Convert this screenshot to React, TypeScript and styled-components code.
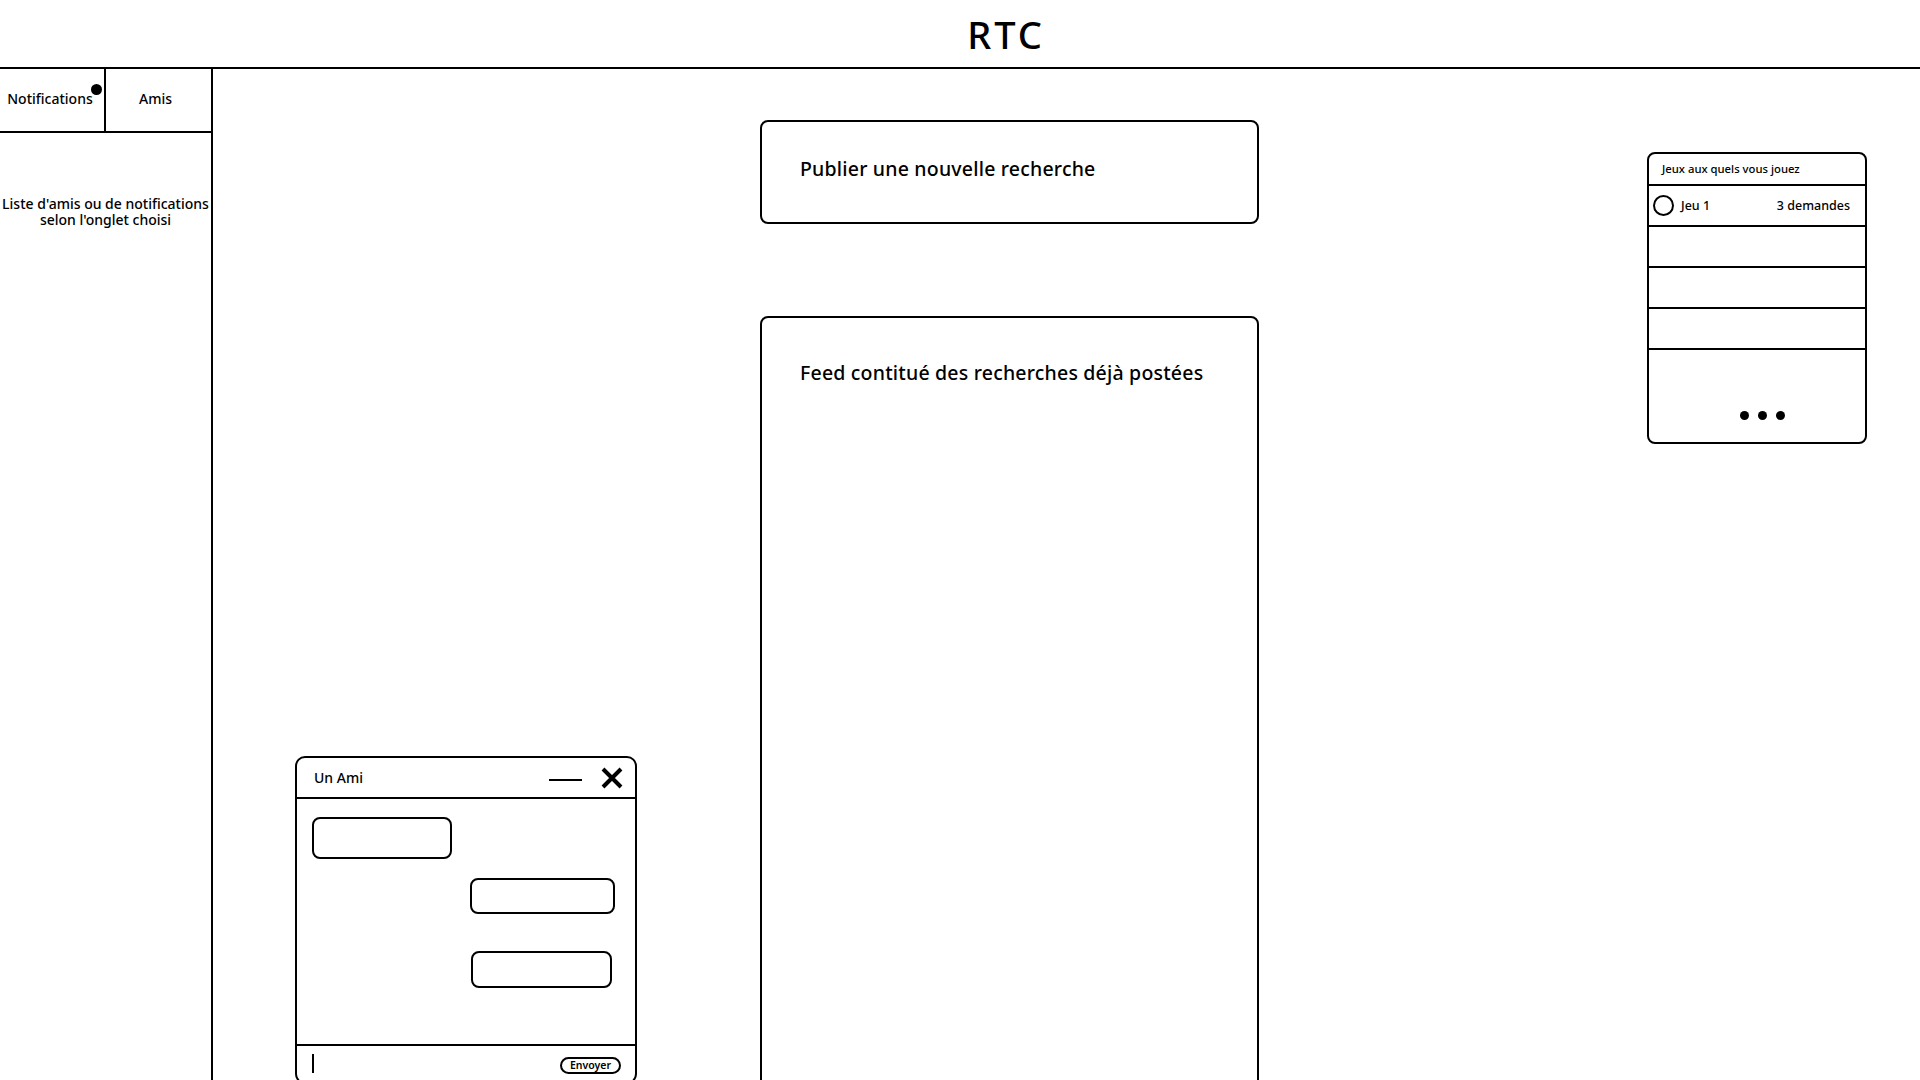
import styled, { createGlobalStyle } from "styled-components";

const GlobalStyle = createGlobalStyle`
  * {
    box-sizing: border-box;
  }

  html,
  body {
    margin: 0;
    padding: 0;
    background: #ffffff;
  }

  body {
    font-family: "Noto Sans", "Open Sans", sans-serif;
    color: #000000;
    overflow: hidden;
  }
`;

const Page = styled.div`
  width: 1920px;
  height: 1080px;
  position: relative;
  overflow: hidden;
  display: flex;
  flex-direction: column;
`;

const Header = styled.header`
  height: 69px;
  flex-shrink: 0;
  border-bottom: 2px solid #000;
  display: flex;
  align-items: center;
  justify-content: center;
  padding-left: 92px;
`;

const Title = styled.h1`
  margin: 0;
  font-size: 38px;
  font-weight: 500;
  letter-spacing: 3px;
`;

const Body = styled.div`
  flex: 1;
  display: flex;
  min-height: 0;
`;

const Sidebar = styled.aside`
  width: 213px;
  flex-shrink: 0;
  border-right: 2px solid #000;
  display: flex;
  flex-direction: column;
`;

const Tabs = styled.div`
  height: 64px;
  display: grid;
  grid-template-columns: 106px 1fr;
  border-bottom: 2px solid #000;
`;

const Tab = styled.div<{ $divider?: boolean }>`
  position: relative;
  display: flex;
  align-items: center;
  justify-content: center;
  font-size: 14px;
  font-weight: 500;
  padding-bottom: 3px;
  padding-right: ${(p) => (p.$divider ? "4px" : "6px")};
  border-right: ${(p) => (p.$divider ? "2px solid #000" : "none")};
`;

const Badge = styled.span`
  position: absolute;
  top: 15px;
  right: 2px;
  width: 11px;
  height: 11px;
  border-radius: 50%;
  background: #000;
`;

const SidebarHint = styled.p`
  margin: 0;
  padding-top: 63px;
  text-align: center;
  font-size: 14px;
  line-height: 16px;
  font-weight: 500;
`;

const Main = styled.main`
  flex: 1;
  display: flex;
  align-items: flex-start;
  padding-left: 547px;
  padding-top: 51px;
`;

const FeedColumn = styled.div`
  width: 499px;
  display: flex;
  flex-direction: column;
  gap: 92px;
`;

const Card = styled.section<{ $height: number; $padTop: number }>`
  height: ${(p) => p.$height}px;
  border: 2px solid #000;
  border-radius: 8px;
  padding: ${(p) => p.$padTop}px 30px 0 38px;
  font-size: 19.5px;
  letter-spacing: 0.2px;
  font-weight: 500;
`;

const GamesCard = styled.div`
  width: 220px;
  height: 292px;
  margin-left: 388px;
  margin-top: 32px;
  border: 2px solid #000;
  border-radius: 8px;
  display: flex;
  flex-direction: column;
`;

const GamesHeader = styled.div`
  height: 32px;
  border-bottom: 2px solid #000;
  padding-left: 13px;
  padding-bottom: 2px;
  display: flex;
  align-items: center;
  font-size: 11.3px;
  font-weight: 500;
`;

const GameRow = styled.div`
  height: 41px;
  border-bottom: 2px solid #000;
  display: flex;
  align-items: center;
  padding: 0 15px 0 4px;
  font-size: 12.5px;
  font-weight: 500;
`;

const GameIcon = styled.span`
  width: 21px;
  height: 21px;
  border: 2px solid #000;
  border-radius: 50%;
  margin-right: 7px;
`;

const GameName = styled.span`
  flex: 1;
`;

const MoreDots = styled.div`
  flex: 1;
  display: flex;
  justify-content: center;
  gap: 9px;
  padding-top: 61px;
  padding-left: 10px;
`;

const Dot = styled.span`
  width: 9px;
  height: 9px;
  border-radius: 50%;
  background: #000;
`;

const ChatWindow = styled.div`
  position: absolute;
  left: 295px;
  top: 756px;
  width: 342px;
  height: 328px;
  border: 2px solid #000;
  border-radius: 10px;
  display: flex;
  flex-direction: column;
  background: #fff;
`;

const ChatHeader = styled.div`
  height: 41px;
  border-bottom: 2px solid #000;
  display: flex;
  align-items: center;
  padding: 0 12px 0 17px;
  font-size: 14px;
  font-weight: 500;
`;

const ChatName = styled.span`
  flex: 1;
`;

const Minimize = styled.span`
  width: 33px;
  height: 2px;
  background: #000;
  margin-right: 19px;
  margin-top: 4px;
`;

const ChatBody = styled.div`
  height: 247px;
  border-bottom: 2px solid #000;
  display: flex;
  flex-direction: column;
  padding: 18px 0 0;
`;

const Bubble = styled.div<{
  $w: number;
  $h: number;
  $left?: number;
  $right?: number;
  $mt?: number;
}>`
  width: ${(p) => p.$w}px;
  height: ${(p) => p.$h}px;
  margin-top: ${(p) => p.$mt ?? 0}px;
  border: 2px solid #000;
  border-radius: 8px;
  align-self: ${(p) => (p.$right !== undefined ? "flex-end" : "flex-start")};
  margin-left: ${(p) => p.$left ?? 0}px;
  margin-right: ${(p) => p.$right ?? 0}px;
`;

const ChatFooter = styled.div`
  flex: 1;
  display: flex;
  align-items: flex-start;
  justify-content: space-between;
  padding: 8px 14px 0 15px;
`;

const Caret = styled.span`
  width: 2px;
  height: 19px;
  background: #000;
`;

const SendButton = styled.button`
  height: 17px;
  padding: 0 8px;
  border: 2px solid #000;
  border-radius: 9px;
  background: #fff;
  font-family: inherit;
  font-size: 10.5px;
  font-weight: 600;
  line-height: 1;
  margin-top: 3px;
  color: #000;
`;

const CloseIcon = () => (
  <svg width="22" height="22" viewBox="0 0 22 22">
    <path d="M2 2 L20 20 M20 2 L2 20" stroke="#000" strokeWidth="4" />
  </svg>
);

export default function App() {
  return (
    <Page>
      <GlobalStyle />
      <Header>
        <Title>RTC</Title>
      </Header>
      <Body>
        <Sidebar>
          <Tabs>
            <Tab $divider>
              Notifications
              <Badge />
            </Tab>
            <Tab>Amis</Tab>
          </Tabs>
          <SidebarHint>
            Liste d'amis ou de notifications
            <br />
            selon l'onglet choisi
          </SidebarHint>
        </Sidebar>
        <Main>
          <FeedColumn>
            <Card $height={104} $padTop={33}>
              Publier une nouvelle recherche
            </Card>
            <Card $height={800} $padTop={41}>
              Feed contitué des recherches déjà postées
            </Card>
          </FeedColumn>
          <GamesCard>
            <GamesHeader>Jeux aux quels vous jouez</GamesHeader>
            <GameRow>
              <GameIcon />
              <GameName>Jeu 1</GameName>
              <span>3 demandes</span>
            </GameRow>
            <GameRow />
            <GameRow />
            <GameRow />
            <MoreDots>
              <Dot />
              <Dot />
              <Dot />
            </MoreDots>
          </GamesCard>
        </Main>
      </Body>
      <ChatWindow>
        <ChatHeader>
          <ChatName>Un Ami</ChatName>
          <Minimize />
          <CloseIcon />
        </ChatHeader>
        <ChatBody>
          <Bubble $w={140} $h={42} $left={15} />
          <Bubble $w={145} $h={36} $right={20} $mt={19} />
          <Bubble $w={141} $h={37} $right={23} $mt={37} />
        </ChatBody>
        <ChatFooter>
          <Caret />
          <SendButton>Envoyer</SendButton>
        </ChatFooter>
      </ChatWindow>
    </Page>
  );
}
